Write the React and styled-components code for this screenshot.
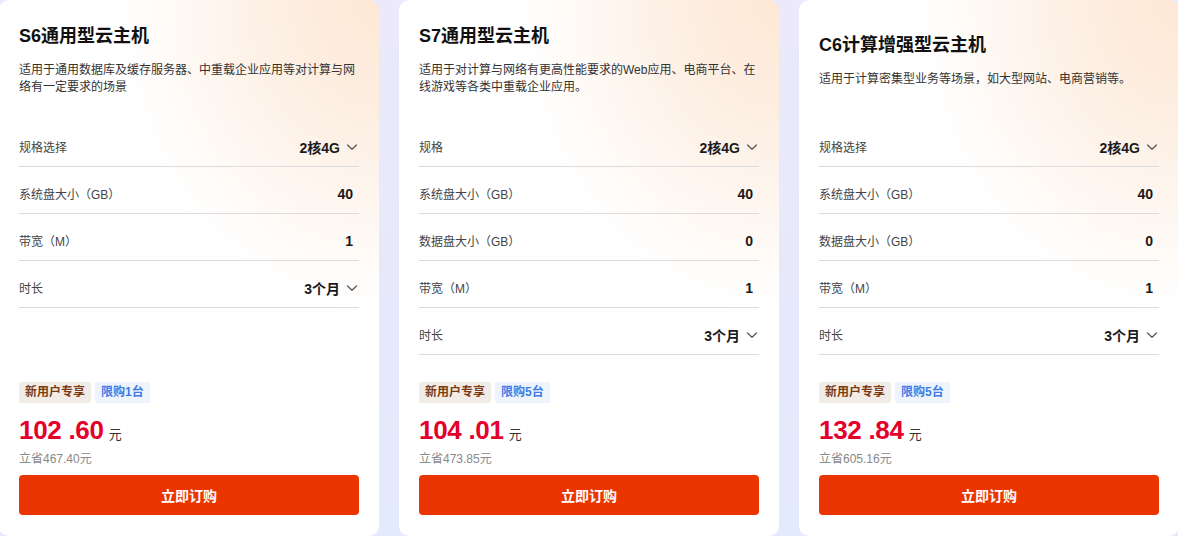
import React from "react";
import styled, { createGlobalStyle } from "styled-components";

const Global = createGlobalStyle`
  html, body { margin: 0; padding: 0; }
  body {
    width: 1178px;
    height: 536px;
    overflow: hidden;
    font-family: "Liberation Sans", Arial, "Noto Sans CJK SC", sans-serif;
    background: linear-gradient(180deg, #ebe9fa 0%, #e6e9fb 60%, #e3eafb 100%);
  }
`;

const Page = styled.div`
  display: flex;
  gap: 20px;
  margin-left: -1px;
  height: 536px;
`;

const Card = styled.div`
  flex: 0 0 380px;
  box-sizing: border-box;
  height: 536px;
  border-radius: 10px;
  padding: 0 20px 21px;
  display: flex;
  flex-direction: column;
  background:
    radial-gradient(ellipse 260px 310px at 100% 0%, #fde8d5 0%, #fdeee1 35%, rgba(255,255,255,0) 100%),
    #fff;
`;

const Header = styled.div`
  height: 120px;
  display: flex;
  flex-direction: column;
  justify-content: center;
`;

const Title = styled.div`
  font-size: 18px;
  font-weight: 700;
  line-height: 24px;
  color: #111;
  margin-bottom: 14px;
`;

const Desc = styled.div`
  font-size: 12px;
  line-height: 17px;
  color: #333;
`;

const Row = styled.div`
  box-sizing: border-box;
  height: 47px;
  padding-top: 7px;
  display: flex;
  align-items: center;
  justify-content: space-between;
  border-bottom: 1px solid #dcdcdc;
`;

const Label = styled.span`
  font-size: 12px;
  color: #444;
`;

const Value = styled.span`
  display: flex;
  align-items: center;
  gap: 6px;
  font-size: 14px;
  font-weight: 700;
  color: #1a1a1a;
  padding-right: ${(p) => (p.$select ? "1px" : "6px")};
`;

const Bottom = styled.div`
  margin-top: auto;
  display: flex;
  flex-direction: column;
`;

const Tags = styled.div`
  display: flex;
  gap: 4px;
  margin-bottom: 12px;
`;

const Tag = styled.span`
  height: 21px;
  line-height: 21px;
  padding: 0 6px;
  border-radius: 2px;
  font-size: 12px;
  font-weight: 700;
  color: ${(p) => (p.$blue ? "#3d7ce6" : "#7b3a12")};
  background: ${(p) => (p.$blue ? "#eef3fd" : "#f1ece6")};
`;

const PriceLine = styled.div`
  display: flex;
  align-items: baseline;
  gap: 5px;
  height: 31px;
`;

const Price = styled.span`
  font-size: 26px;
  font-weight: 700;
  color: #e4002b;
  letter-spacing: -0.3px;
`;

const Unit = styled.span`
  font-size: 13px;
  color: #333;
`;

const Save = styled.div`
  font-size: 12px;
  color: #888;
  line-height: 16px;
  margin-top: 5px;
  margin-bottom: 8px;
`;

const Button = styled.button`
  height: 40px;
  border: none;
  border-radius: 4px;
  background: #eb3500;
  color: #fff;
  font-family: inherit;
  font-size: 14px;
  font-weight: 700;
  cursor: pointer;
`;

const Chevron = () => (
  <svg width="12" height="12" viewBox="0 0 12 12" fill="none">
    <path d="M1.5 4 L6 8.3 L10.5 4" stroke="#555" strokeWidth="1.2" strokeLinecap="round" strokeLinejoin="round" />
  </svg>
);

const cards = [
  {
    title: "S6通用型云主机",
    desc: "适用于通用数据库及缓存服务器、中重载企业应用等对计算与网络有一定要求的场景",
    rows: [
      ["规格选择", "2核4G", true],
      ["系统盘大小（GB）", "40"],
      ["带宽（M）", "1"],
      ["时长", "3个月", true],
    ],
    limit: "限购1台",
    int: "102",
    dec: ".60",
    save: "立省467.40元",
  },
  {
    title: "S7通用型云主机",
    desc: "适用于对计算与网络有更高性能要求的Web应用、电商平台、在线游戏等各类中重载企业应用。",
    rows: [
      ["规格", "2核4G", true],
      ["系统盘大小（GB）", "40"],
      ["数据盘大小（GB）", "0"],
      ["带宽（M）", "1"],
      ["时长", "3个月", true],
    ],
    limit: "限购5台",
    int: "104",
    dec: ".01",
    save: "立省473.85元",
  },
  {
    title: "C6计算增强型云主机",
    desc: "适用于计算密集型业务等场景，如大型网站、电商营销等。",
    rows: [
      ["规格选择", "2核4G", true],
      ["系统盘大小（GB）", "40"],
      ["数据盘大小（GB）", "0"],
      ["带宽（M）", "1"],
      ["时长", "3个月", true],
    ],
    limit: "限购5台",
    int: "132",
    dec: ".84",
    save: "立省605.16元",
  },
];

export default function App() {
  return (
    <>
      <Global />
      <Page>
        {cards.map((c) => (
          <Card key={c.title}>
            <Header>
              <Title>{c.title}</Title>
              <Desc>{c.desc}</Desc>
            </Header>
            {c.rows.map(([l, v, sel]) => (
              <Row key={l}>
                <Label>{l}</Label>
                <Value $select={sel}>
                  {v}
                  {sel && <Chevron />}
                </Value>
              </Row>
            ))}
            <Bottom>
              <Tags>
                <Tag>新用户专享</Tag>
                <Tag $blue>{c.limit}</Tag>
              </Tags>
              <PriceLine>
                <Price>
                  {c.int} {c.dec}
                </Price>
                <Unit>元</Unit>
              </PriceLine>
              <Save>{c.save}</Save>
              <Button>立即订购</Button>
            </Bottom>
          </Card>
        ))}
      </Page>
    </>
  );
}
